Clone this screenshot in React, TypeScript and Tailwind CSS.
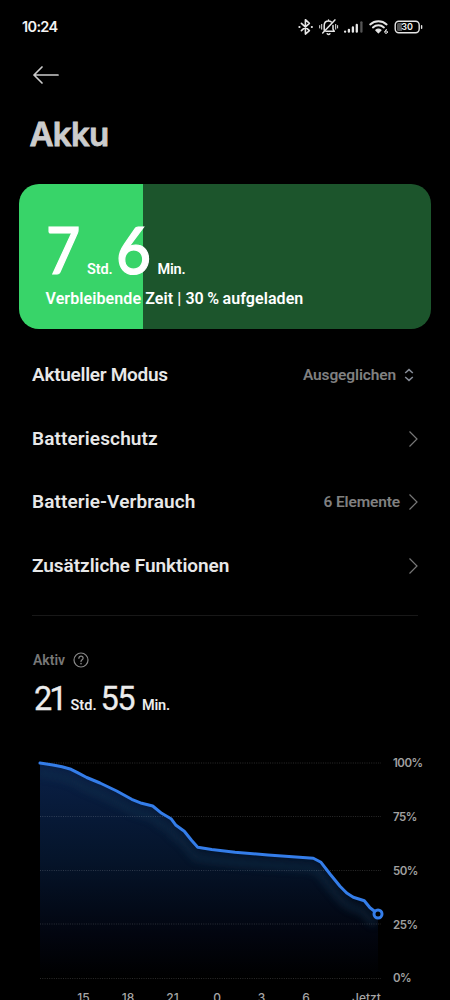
import type { ReactNode } from 'react'

interface MenuItem {
  label: string
  value?: string
  kind: 'select' | 'link'
  labelClass: string
}

const MENU: MenuItem[] = [
  { label: 'Aktueller Modus', value: 'Ausgeglichen', kind: 'select', labelClass: 'tracking-[-0.28px]' },
  { label: 'Batterieschutz', kind: 'link', labelClass: 'tracking-[0.12px]' },
  { label: 'Batterie-Verbrauch', value: '6 Elemente', kind: 'link', labelClass: 'tracking-[0.1px]' },
  { label: 'Zusätzliche Funktionen', kind: 'link', labelClass: 'tracking-[-0.04px]' },
]

// chart coordinates, 1 unit = 1px
const LEVELS: [number, number][] = [
  [8, 13], [21, 15], [30, 16.8], [39, 19.3], [46.5, 23.2], [54.7, 27.5], [68, 33], [84.7, 41], [99.7, 49.3],
  [109.7, 53.3], [120.7, 56], [129.7, 63.3], [139, 68.7], [144, 75.3], [152.3, 81.3],
  [159.7, 90.5], [165.7, 97.2], [179.7, 99.6], [203, 102.3], [236, 105], [281.3, 108.2],
  [289, 112.3], [298, 124], [308, 136.3], [314.7, 143], [321.3, 147.2], [332.3, 150.7],
  [338, 157.7], [346, 164],
]
const LINE = 'M' + LEVELS.map(p => p.join(' ')).join(' L')
const AREA = `${LINE} L346 228 L8 228 Z`
const GRID = [13, 66.5, 120.5, 174, 228.5]

function StatusBar() {
  return (
    <div className="flex h-[54px] items-center justify-between pl-[22px] pr-[27px]">
      <span className="font-['Inter'] text-[14.5px] leading-5 font-semibold tracking-[-0.65px] text-[#f4f4f4]">10:24</span>
      <svg width="126" height="20" viewBox="297 17 126 20" fill="none" stroke="#e6e6e6" strokeLinecap="round" strokeLinejoin="round">
        {/* bluetooth */}
        <path d="M301.4 23.3l8 7.4-4 3.4V19.7l4 3.6-8 7.4" strokeWidth="1.6" />
        <path d="M299.4 27h.1M311.8 27h.1" strokeWidth="2.1" />
        {/* silent */}
        <path d="M324.2 30.3v-4.6c0-3 1.7-4.7 4.3-4.7 1.2 0 2.2.4 2.9 1M333 25.5v3.7l1.3 2.1h-8.5M327.2 33.8c.8.7 2 .7 2.7 0M328.5 20.4v-.5" strokeWidth="1.5" />
        <path d="M322.7 32.9l12.2-13" strokeWidth="1.5" />
        <path d="M321.7 24.4v4.8M319.7 25.6v2.4M335.7 24.4v4.8M337.6 25.6v2.4" strokeWidth="1" />
        {/* signal */}
        <path d="M345.1 31.6v.1M348.9 29.8v1.9M352.9 27.5v4.2M356.8 25v6.7" strokeWidth="2.3" />
        <path d="M361.4 22.3v9.4" stroke="#555" strokeWidth="2.3" />
        {/* wifi */}
        <path d="M370.2 24.4c4.7-4.3 11.7-4.3 16.4 0M372.9 27.4c3.2-2.8 7.8-2.8 11 0" strokeWidth="2" />
        <path d="M375.7 30.2c1.6-1.3 3.8-1.3 5.4 0l-2.7 2.6z" fill="#e6e6e6" strokeWidth="1.1" />
        <circle cx="386.1" cy="32.1" r="1.3" strokeWidth="1" />
        <path d="M384.9 31.6l1.5-2.3" strokeWidth="1" />
        {/* battery */}
        <rect x="395.2" y="21.3" width="24" height="11.4" rx="3.6" strokeWidth="1.4" />
        <path d="M397 24.5q0-1.5 1.5-1.5h3.5v8h-3.5q-1.5 0-1.5-1.5z" fill="#555" stroke="none" />
        <path d="M421.6 25.8v2.4" strokeWidth="1.4" />
        <text x="407.2" y="30.3" textAnchor="middle" fill="#f0f0f0" stroke="none" fontFamily="Inter" fontSize="9" fontWeight="600">30</text>
      </svg>
    </div>
  )
}

function Unit({ children, className }: { children: ReactNode; className: string }) {
  return <span className={`inline-block font-['Roboto'] font-semibold [-webkit-text-stroke:0] ${className}`}>{children}</span>
}

function BatteryCard() {
  return (
    <section className="ml-[19px] h-[145px] w-[412px] overflow-hidden rounded-[20px] bg-[linear-gradient(to_right,#38d469_124px,#1c552c_124px)] text-white">
      <div className="flex h-[97px] items-baseline pt-[25px] font-['Lato'] text-[65px] leading-[80px] font-medium">
        <span className="ml-[26.5px] w-[41.5px] origin-left scale-x-[0.91] [-webkit-text-stroke:1.2px_#fff]">7</span>
        <Unit className="w-[28.5px] text-[14.5px] tracking-[-0.1px]">Std.</Unit>
        <span className="w-[42px] origin-left scale-x-[0.93] [-webkit-text-stroke:1.2px_#fff]">6</span>
        <Unit className="text-[14.5px] tracking-[-0.2px]">Min.</Unit>
      </div>
      <p className="ml-[26.5px] pt-2 font-['Roboto'] text-[16px] leading-5 font-semibold tracking-[0.09px] whitespace-nowrap">
        Verbleibende Zeit | 30&#8201;%&#8201;aufgeladen
      </p>
    </section>
  )
}

function MenuRow({ item }: { item: MenuItem }) {
  return (
    <li className="flex h-[63.7px] items-center justify-between pr-[32px] pl-[32px]">
      <span className={`font-['Roboto'] text-[19px] leading-6 font-semibold text-[#e8e8e8] ${item.labelClass}`}>{item.label}</span>
      <span className="flex items-center">
        {item.value && <span className="font-['Roboto'] text-[15.5px] leading-6 font-semibold tracking-[-0.13px] text-[#808080]">{item.value}</span>}
        {item.kind === 'select' ? (
          <svg className="mr-1 ml-2" width="10" height="14" viewBox="0 0 10 14" fill="none" stroke="#858b96" strokeWidth="1.5">
            <path d="M1.2 5L5 1.6 8.8 5M1.2 9L5 12.4 8.8 9" />
          </svg>
        ) : (
          <svg className="ml-2" width="10" height="16" viewBox="0 0 10 16" fill="none" stroke="#777" strokeWidth="1.2">
            <path d="M1.5 0.5L9 8l-7.5 7.5" />
          </svg>
        )}
      </span>
    </li>
  )
}

function LevelChart() {
  return (
    <div className="mt-[28px] ml-8 flex">
      <div className="w-[361px]">
        <svg width="361" height="240" viewBox="0 0 361 240" fill="none">
          <defs>
            <linearGradient id="area" x1="0" y1="13" x2="0" y2="228" gradientUnits="userSpaceOnUse">
              <stop offset="0" stopColor="#0a2047" />
              <stop offset="0.45" stopColor="#05142a" />
              <stop offset="0.8" stopColor="#02050f" />
              <stop offset="1" stopColor="#000" />
            </linearGradient>
            <clipPath id="under">
              <path d={AREA} />
            </clipPath>
            <filter id="glow" x="-10%" y="-20%" width="120%" height="150%">
              <feGaussianBlur stdDeviation="3.5" />
            </filter>
          </defs>
          <path d={AREA} fill="url(#area)" />
          <g clipPath="url(#under)">
            <path d={LINE} transform="translate(-2 10)" stroke="#123650" strokeWidth="8" opacity="0.42" filter="url(#glow)" />
          </g>
          {GRID.map(y => (
            <path key={y} d={`M8 ${y}H349`} stroke="#fff" strokeOpacity="0.17" strokeDasharray="1 1.3" />
          ))}
          <path d={LINE} stroke="#347de9" strokeWidth="3" strokeLinecap="round" strokeLinejoin="round" />
          <circle cx="346" cy="164" r="4" fill="#000" stroke="#347de9" strokeWidth="3" />
        </svg>
        <div className="flex font-['Inter'] text-[12px] leading-4 font-medium text-[#a6a6a6]">
          <span className="ml-[36px] w-[31px] text-center">15</span>
          <span className="ml-[13.5px] w-[31px] text-center">18</span>
          <span className="ml-[13.5px] w-[31px] text-center">21</span>
          <span className="ml-[13.5px] w-[31px] text-center">0</span>
          <span className="ml-[13.5px] w-[31px] text-center">3</span>
          <span className="ml-[13.5px] w-[31px] text-center">6</span>
          <span className="ml-[30.5px]">Jetzt</span>
        </div>
      </div>
      <div className="flex h-[229px] flex-col justify-between pt-[5px] font-['Inter'] text-[11.5px] leading-4 font-semibold tracking-[-0.5px] text-[#a0a0a0]">
        <span>100%</span>
        <span>75%</span>
        <span>50%</span>
        <span>25%</span>
        <span className="-mb-[7px]">0%</span>
      </div>
    </div>
  )
}

export default function App() {
  return (
    <div className="h-[1000px] w-[450px] overflow-hidden bg-black font-['Roboto',sans-serif]">
      <StatusBar />
      <header className="h-[130px] pt-[11px]">
        <svg className="ml-8" width="28" height="20" viewBox="0 0 28 20" fill="none" stroke="#ccc" strokeWidth="1.7" strokeLinecap="round" strokeLinejoin="round">
          <path d="M26 10H2M10 2L2 10l8 8" />
        </svg>
        <h1 className="mt-[28px] ml-[29.5px] font-['Inter'] text-[33px] leading-[42px] font-semibold tracking-[-0.7px] text-[#ccc] [-webkit-text-stroke:0.8px_#ccc]">Akku</h1>
      </header>
      <BatteryCard />
      <ul className="mt-[14px]">
        {MENU.map(item => <MenuRow key={item.label} item={item} />)}
      </ul>
      <div className="mx-8 mt-[17.5px] h-px bg-[#181818]" />
      <div className="mt-[34px] ml-[33px] flex h-5 items-center">
        <span className="text-[14px] font-semibold text-[#777]">Aktiv</span>
        <svg className="ml-[8px]" width="16" height="16" viewBox="0 0 16 16" fill="none" stroke="#888" strokeWidth="1.2" strokeLinecap="round">
          <circle cx="8" cy="8" r="7" />
          <path d="M5.9 6.3c0-1.3.9-2.1 2.1-2.1s2.1.8 2.1 2c0 1.5-2.1 1.5-2.1 3.2" />
          <path d="M8 11.6v.1" strokeWidth="1.5" />
        </svg>
      </div>
      <div className="mt-[6px] ml-[34px] flex h-[46px] items-baseline font-['Roboto'] text-[32.5px] leading-[46px] text-[#ececec] [-webkit-text-stroke:0.3px_#ececec]">
        <span className="w-[36.5px] tracking-[-2.9px]">21</span>
        <Unit className="w-[30px] text-[14.5px]">Std.</Unit>
        <span className="w-[41.5px] tracking-[-1.5px]">55</span>
        <Unit className="text-[14.5px] tracking-[-0.2px]">Min.</Unit>
      </div>
      <LevelChart />
    </div>
  )
}
